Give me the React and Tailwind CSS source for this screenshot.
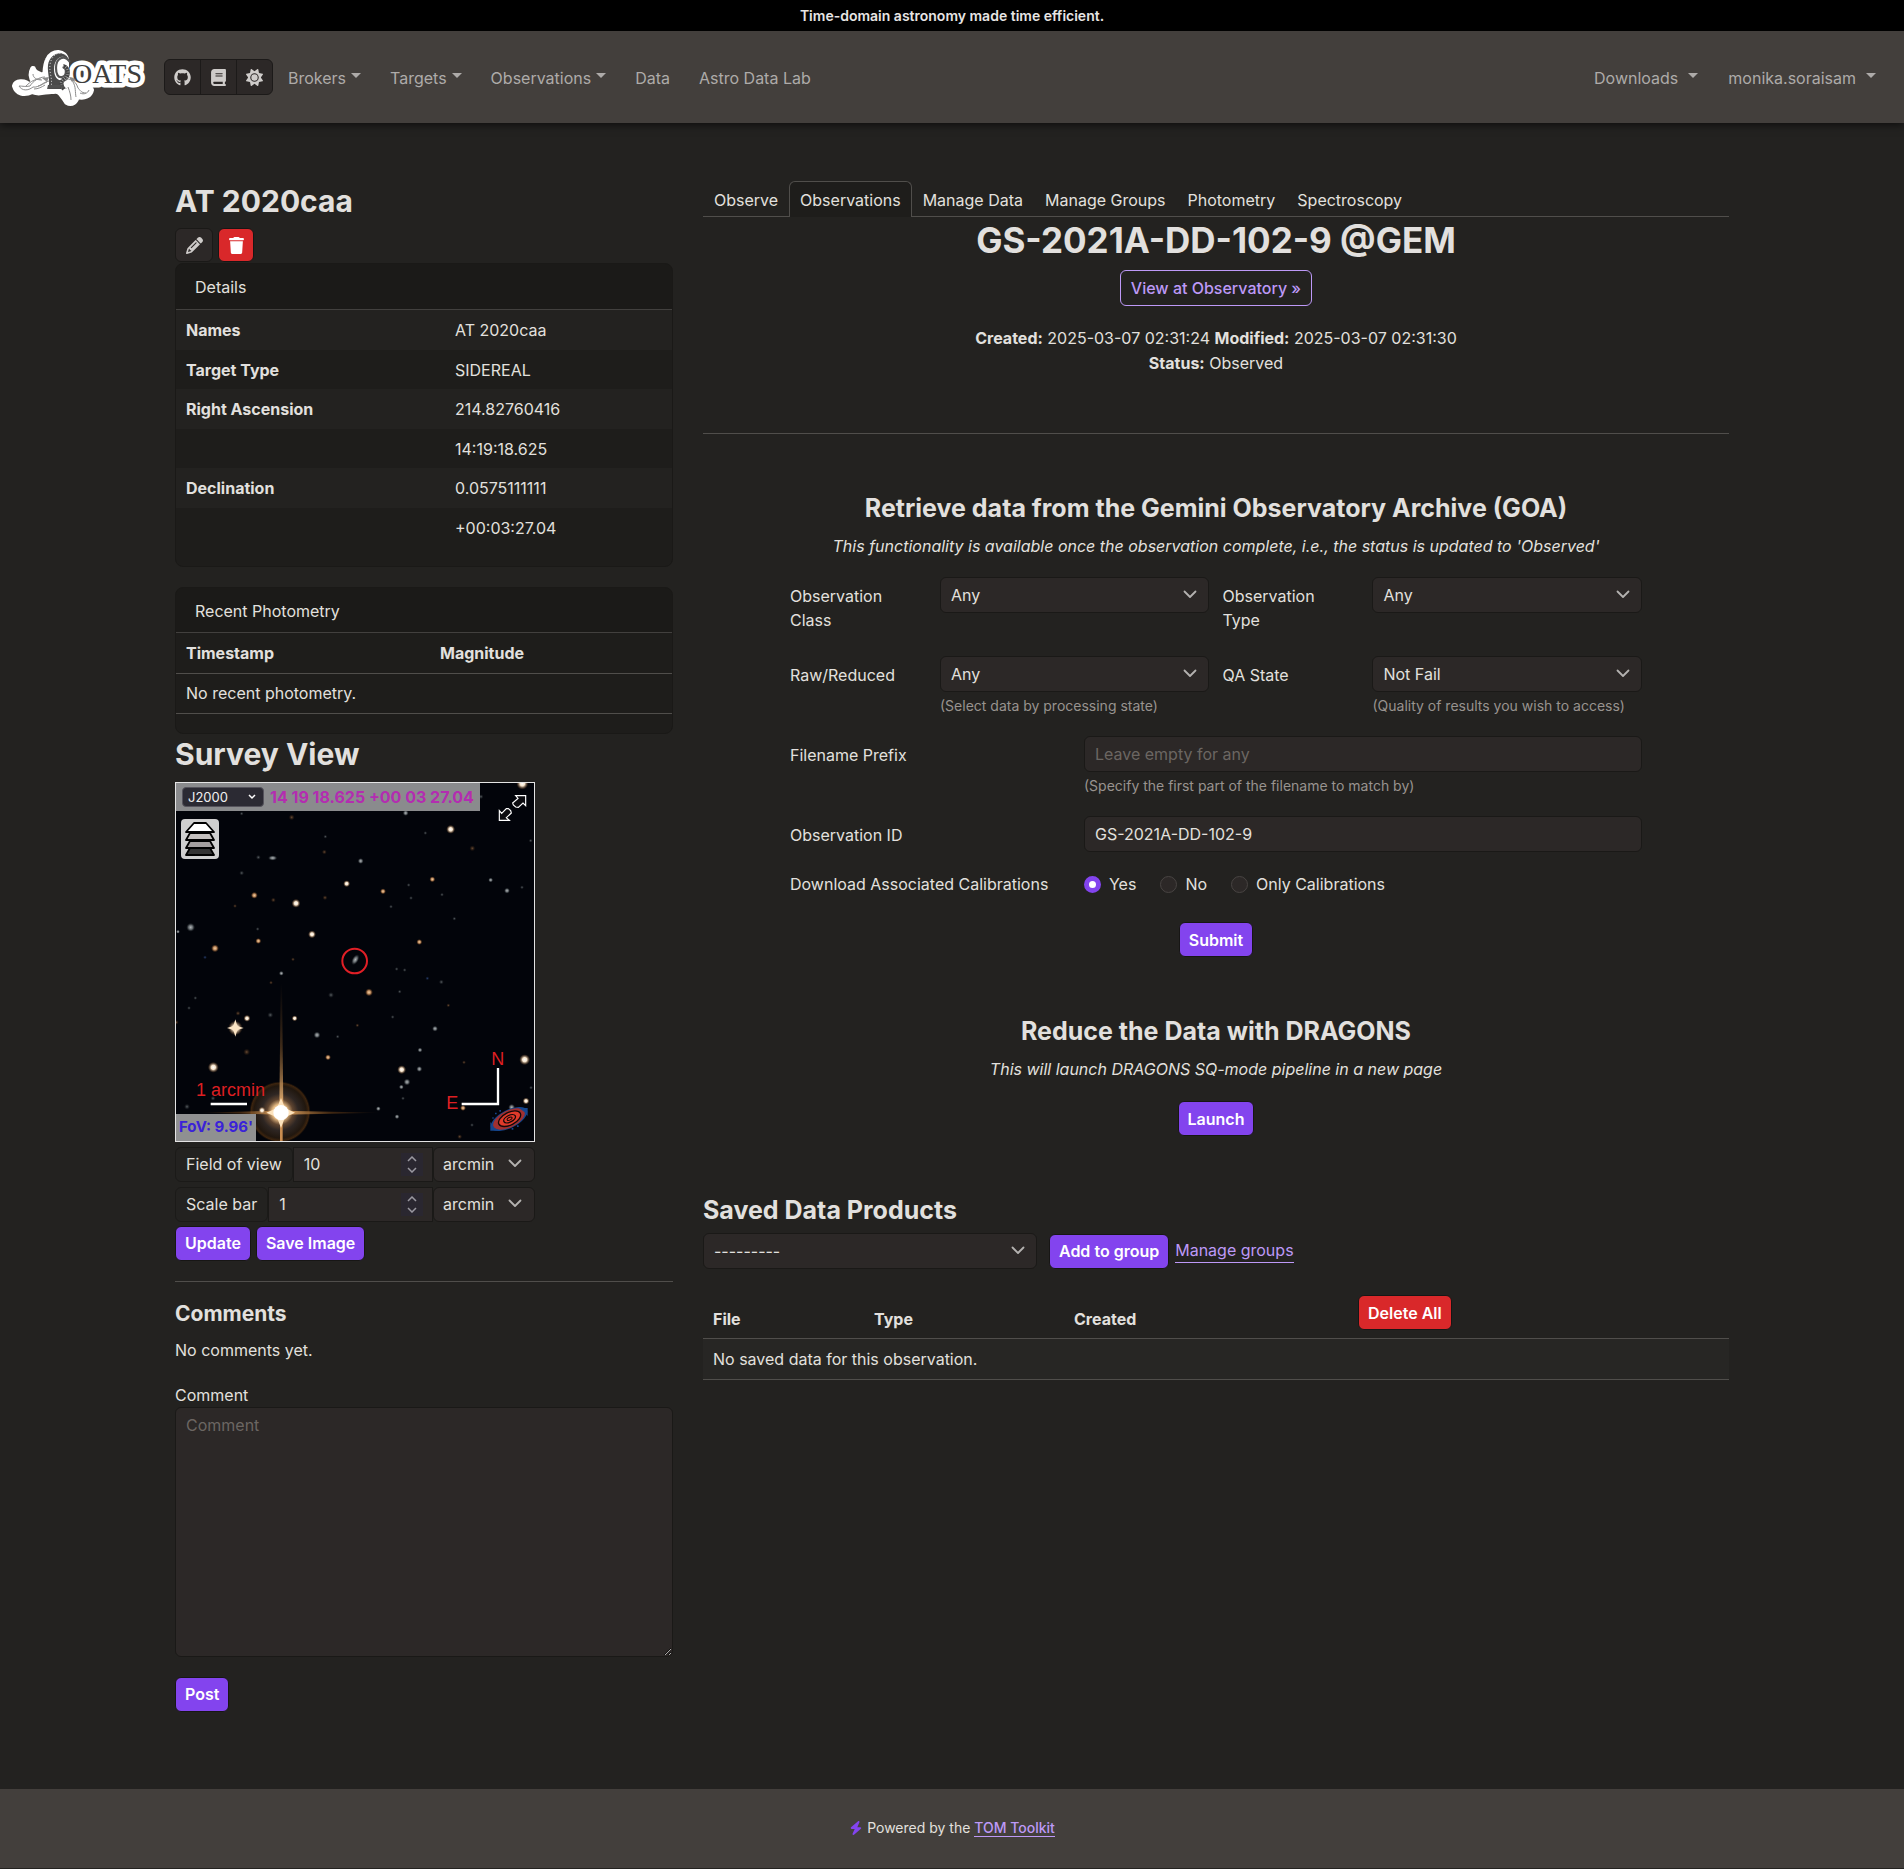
import React from "react";
import { FaGithub, FaBook, FaSun, FaPencil, FaTrash, FaBolt } from "react-icons/fa6";

const field =
  "block w-full h-9 rounded-md border border-[#1a1917] bg-[#2c2827] px-[10px] text-base text-[#e2e0de] placeholder:text-[#6b6662] outline-none";
const primary =
  "inline-flex h-[35px] items-center rounded-md border border-[#171615] bg-[#8344ee] px-[9px] text-base font-semibold text-white";

function Chevron({ className }) {
  return (
    <svg viewBox="0 0 14 9" className={className} fill="none" stroke="#b4b2b0" strokeWidth="1.8" strokeLinecap="round" strokeLinejoin="round" aria-hidden="true">
      <path d="M1.5 1.5 7 7l5.500-5.500" />
    </svg>
  );
}

function SelectBox({ id, value, label }) {
  return (
    <div className="relative">
      <select id={id} aria-label={label} defaultValue={value} className={field + " appearance-none pr-8"}>
        <option>{value}</option>
      </select>
      <Chevron className="pointer-events-none absolute right-3 top-[13px] h-[9px] w-[14px]" />
    </div>
  );
}

function Caret() {
  return <span className="mb-1 inline-block border-x-[5px] border-t-[5px] border-x-transparent border-t-current" />;
}

function Logo() {
  const ground = "M18 39C12 33 4 35 3 39c2 7 9 9 17 5 7 4 15-1 21 0 7-2 9 4 14 11 5 3 9-1 10-6 8 2 13-1 14-6-2-5-9-4-12-1-2-7-7-11-13-12V14C54 4 40 3 36 13c-3 6-2 12-3 17-5-3-11-3-12-8-2 4-2 9 1 12z";
  return (
    <svg viewBox="0 0 134 60" className="h-[60px] w-[134px]" aria-label="GOATS" role="img">
      <path d={ground} fill="#fff" stroke="#fff" strokeWidth="6" strokeLinejoin="round" />
      <text x="60" y="36" fontFamily="Liberation Serif" fontSize="28" fill="#3d3d3d" stroke="#fff" strokeWidth="9" strokeLinejoin="round" paintOrder="stroke">OATS</text>
      <path d="M57 13C53 2 38 5 36 18c-1 8 3 16 0 24h17c-3-8-1-13-5-16" fill="#4a4a4a" />
      <path d="M57 14C51 5 42 11 42 22c0 7 3 12 8 11 6-1 6-11 1-14-4 0-5 6-2 9" fill="#fff" />
      <path d="M58 15C52 7 44 11 44 21c0 6 2 10 6 9 5-1 5-9 1-10" fill="none" stroke="#555" strokeWidth="2.200" />
      <path d="M54 8c-8-5-15 1-16 10-1 8 3 14 1 22" fill="none" stroke="#ddd" strokeWidth="1" strokeDasharray="1 2" />
      <path d="M51 19c7 2 6 12 0 14-3 3-3 6 1 9" fill="none" stroke="#444" strokeWidth="4" />
      <path d="M51 19c7 2 6 12 0 14-3 3-3 6 1 9" fill="none" stroke="#bbb" strokeWidth="3" strokeDasharray=".6 2" />
      <g fill="none" stroke="#8d8d8d" strokeWidth="1">
        <path d="M33 30c-6 0-12 4-15 9-4 1-8 0-11 0 3 5 9 5 14 1 6 1 10-5 16-6M21 27c0 4 4 6 9 6M14 39c5-5 9-7 15-7M22 42c4 0 8-2 11-4M54 32c7 0 10 3 12 9 2 2 3 5 8 5M56 40c2 5 3 9 3 13M61 35c3 5 2 10 3 15M68 46c4 2 8 0 9-3M26 39c3 0 6-3 9-4" />
      </g>
      <path d="M36 38h14l5 4c-6-2-13-1-20 0z" fill="#505050" />
      <path d="M57 30c3 0 5 1 7 3l-4 2zM30 31l7-1-2 5z" fill="#8a8a8a" />
    </svg>
  );
}

const stars = [
  [857, 178, 9, "w"], [587, 273, 6, "g"], [545, 341, 7, "w"], [654, 364, 6, "o"], [802, 328, 6, "o"],
  [393, 400, 9, "w"], [268, 376, 7, "o"], [441, 493, 8, "w"], [280, 513, 6, "o"], [150, 535, 8, "o"],
  [77, 472, 9, "g"], [763, 516, 6, "o"], [349, 610, 5, "g"], [612, 667, 8, "o"], [246, 745, 7, "w"],
  [389, 745, 6, "w"], [456, 795, 7, "g"], [489, 862, 6, "o"], [145, 892, 11, "w"], [710, 899, 9, "w"],
  [1079, 869, 11, "w"], [1083, 993, 7, "w"], [1072, 41, 12, "w"], [1026, 362, 6, "g"], [977, 330, 5, "g"],
  [810, 776, 6, "g"], [765, 840, 5, "g"], [763, 897, 6, "g"], [726, 936, 7, "g"], [709, 951, 5, "g"],
  [245, 846, 7, "d"], [894, 1014, 6, "o"], [1040, 1012, 7, "g"], [696, 1040, 5, "g"], [640, 1016, 5, "g"],
  [884, 1100, 5, "d"], [83, 1099, 9, "w"], [530, 114, 7, "g"], [546, 117, 5, "g"], [722, 129, 6, "g"],
  [280, 262, 5, "s"], [230, 309, 5, "s"], [380, 142, 6, "d"], [478, 246, 5, "d"], [922, 235, 6, "d"],
  [230, 131, 4, "s"], [480, 383, 5, "d"], [325, 390, 5, "d"], [278, 477, 4, "s"], [316, 735, 6, "s"],
  [219, 730, 5, "d"], [120, 562, 4, "b"], [719, 600, 4, "s"], [829, 636, 5, "s"], [787, 625, 4, "b"],
  [498, 675, 6, "s"], [850, 706, 4, "d"], [577, 766, 4, "d"], [683, 741, 4, "s"], [66, 1010, 6, "s"],
  [1071, 352, 4, "s"], [948, 80, 5, "s"], [831, 374, 4, "s"], [731, 345, 4, "s"], [678, 410, 4, "s"],
  [897, 877, 4, "d"], [144, 985, 5, "s"], [34, 757, 5, "d"], [39, 485, 4, "g"], [91, 684, 4, "s"],
  [72, 714, 4, "s"], [481, 200, 4, "s"], [738, 384, 4, "s"], [868, 446, 4, "s"], [1097, 212, 4, "s"],
  [318, 638, 4, "d"], [695, 597, 4, "s"], [704, 665, 4, "s"], [518, 800, 4, "s"], [1098, 953, 4, "s"],
  [921, 1065, 4, "s"], [714, 985, 4, "s"], [210, 408, 4, "d"], [781, 189, 4, "s"], [384, 568, 4, "d"],
];
const fills = { w: "url(#starWhite)", o: "url(#starOrange)", g: "url(#starGray)", b: "url(#starBlue)", d: "url(#starAmber)", s: "url(#starDim)" };

function SkyMap() {
  return (
    <svg viewBox="33 39 1074 1074" className="absolute inset-0 h-full w-full" aria-hidden="true">
      <defs>
        <radialGradient id="starWhite"><stop offset="0" stopColor="#fff" /><stop offset=".4" stopColor="#f5e3cb" /><stop offset="1" stopColor="#7a4a20" stopOpacity="0" /></radialGradient>
        <radialGradient id="starOrange"><stop offset="0" stopColor="#f4d0a4" /><stop offset=".45" stopColor="#b8865a" /><stop offset="1" stopColor="#5a3010" stopOpacity="0" /></radialGradient>
        <radialGradient id="starGray"><stop offset="0" stopColor="#b4b8ba" /><stop offset=".5" stopColor="#5e6468" /><stop offset="1" stopColor="#202428" stopOpacity="0" /></radialGradient>
        <radialGradient id="starBlue"><stop offset="0" stopColor="#2c4270" /><stop offset="1" stopColor="#102040" stopOpacity="0" /></radialGradient>
        <radialGradient id="starAmber"><stop offset="0" stopColor="#6a4c34" /><stop offset="1" stopColor="#301c0c" stopOpacity="0" /></radialGradient>
        <radialGradient id="starDim"><stop offset="0" stopColor="#5a6064" /><stop offset="1" stopColor="#202428" stopOpacity="0" /></radialGradient>
        <radialGradient id="halo"><stop offset="0" stopColor="#fff2d8" /><stop offset=".25" stopColor="#e8bc84" /><stop offset=".42" stopColor="#6a4c34" stopOpacity=".9" /><stop offset=".6" stopColor="#332a26" stopOpacity=".9" /><stop offset=".85" stopColor="#24190f" stopOpacity=".9" /><stop offset=".94" stopColor="#43280f" stopOpacity=".9" /><stop offset="1" stopColor="#2a1808" stopOpacity="0" /></radialGradient>
        <linearGradient id="spikeV" x1="0" y1="0" x2="0" y2="1"><stop offset="0" stopColor="#6a4520" stopOpacity="0" /><stop offset=".5" stopColor="#7a5228" stopOpacity=".5" /><stop offset="1" stopColor="#f0b878" /></linearGradient>
        <linearGradient id="spikeH"><stop offset="0" stopColor="#e8ac68" /><stop offset=".5" stopColor="#7a4818" stopOpacity=".5" /><stop offset="1" stopColor="#7a4818" stopOpacity="0" /></linearGradient>
        <linearGradient id="spikeL" x1="1" y1="0" x2="0" y2="0"><stop offset="0" stopColor="#e8ac68" /><stop offset=".5" stopColor="#7a4818" stopOpacity=".5" /><stop offset="1" stopColor="#7a4818" stopOpacity="0" /></linearGradient>
      </defs>
      <rect x="33" y="39" width="1074" height="1074" fill="#02040a" />
      {stars.map(([x, y, r, c]) => (
        <circle key={x + "-" + y} cx={x} cy={y} r={r * 1.5} fill={fills[c]} />
      ))}
      <ellipse cx="323" cy="264" rx="14" ry="8" fill="url(#starGray)" />
      <ellipse cx="571" cy="569" rx="10" ry="18" fill="url(#starGray)" transform="rotate(30 571 569)" />
      <circle cx="345" cy="1026" r="92" fill="url(#halo)" />
      <path d="M347 640h4l4 380h-12z" fill="url(#spikeV)" />
      <path d="M345 1024v90h8v-90z" fill="#c98d50" />
      <path d="M350 1022l300 6-300 6z" fill="url(#spikeH)" />
      <path d="M350 1022l-250 6 250 6z" fill="url(#spikeL)" />
      <path d="M348 984l12 30 30 14-30 14-12 32-12-32-32-14 32-14z" fill="#fde3bd" />
      <circle cx="348" cy="1028" r="23" fill="#fff" />
      <circle cx="291" cy="1021" r="11" fill="url(#starWhite)" />
      <circle cx="211" cy="774" r="22" fill="url(#starWhite)" />
      <path d="M211 748l6 20 19 6-19 6-6 20-6-20-19-6 19-6z" fill="#fbe4c4" />
      <circle cx="569" cy="573" r="37" fill="none" stroke="#e01f26" strokeWidth="6" />
      <path d="M137 1002h109" stroke="#fff" strokeWidth="7" />
      <path d="M999 894v108H890" fill="none" stroke="#fff" strokeWidth="7" />
      <g fill="#dd1f22" fontFamily="Liberation Sans" fontSize="54">
        <text x="93" y="977">1 arcmin</text>
        <text x="979" y="884">N</text>
        <text x="844" y="1017">E</text>
      </g>
      <g transform="rotate(-27 1032 1047)">
        <ellipse cx="1032" cy="1047" rx="60" ry="27" fill="#15458c" />
        <ellipse cx="1032" cy="1047" rx="52" ry="25" fill="#a03030" />
        <ellipse cx="1034" cy="1047" rx="36" ry="19" fill="#e03a2a" stroke="#120808" strokeWidth="4" />
        <ellipse cx="1034" cy="1047" rx="19" ry="10" fill="#e03a2a" stroke="#120808" strokeWidth="4" />
        <ellipse cx="1034" cy="1047" rx="8" ry="4" fill="#e03a2a" stroke="#120808" strokeWidth="3" />
      </g>
      <g fill="#15458c">
        <path d="M1062 1014h26v24l-10-12zM976 1056v26h32l-20-8zM990 1028h5v5h-5zM1003 1020h5v5h-5zM1040 1074h5v5h-5zM1056 1066h5v5h-5zM982 1042h4v4h-4z" />
      </g>
      <g fill="#0c0c10" stroke="#fff" strokeWidth="3.500" strokeLinejoin="miter">
        <path d="M1052 77h30v30l-8-8-14 13-8-1-7-6-2-6 16-14z" />
        <path d="M1003 122v29h30l-9-8 15-14-2-7-7-6-6 0-14 14z" />
      </g>
    </svg>
  );
}

function LayersIcon() {
  return (
    <svg viewBox="0 0 30 34" className="h-[34px] w-[30px]" stroke="#000" strokeWidth="1.800" strokeLinejoin="round" aria-hidden="true">
      <path d="M5 26h20l4 7H1z" fill="#333" />
      <path d="M5 19h20l4 7H1z" fill="#a5a0a0" />
      <path d="M5 11h20l4 7H1z" fill="#c4c0be" />
      <path d="M9 1h12l8 9H1z" fill="#fff" />
    </svg>
  );
}

function UnitRow({ id, label, value }) {
  return (
    <div className="flex h-[35px]">
      <label htmlFor={id} className="flex items-center rounded-md border border-[#1b1a18] px-[10px]">{label}</label>
      <div className="relative min-w-0 flex-1">
        <input id={id} type="text" inputMode="numeric" defaultValue={value} className="h-full w-full border border-[#1a1917] bg-[#2c2827] px-[10px] text-[#e2e0de] outline-none" />
        <span className="pointer-events-none absolute right-[10px] top-[6px] flex h-[23px] w-[22px] flex-col items-center justify-center gap-[5px] bg-[#2a2730]">
          <svg viewBox="0 0 10 6" className="h-[6px] w-[10px]" fill="none" stroke="#9a98a0" strokeWidth="1.500"><path d="M1 5l4-4 4 4" /></svg>
          <svg viewBox="0 0 10 6" className="h-[6px] w-[10px]" fill="none" stroke="#9a98a0" strokeWidth="1.500"><path d="M1 1l4 4 4-4" /></svg>
        </span>
      </div>
      <div className="relative w-[102px]">
        <select aria-label={label + " unit"} className="h-full w-full appearance-none rounded-md border border-[#1a1917] bg-[#2c2827] px-[9px] text-[#e2e0de] outline-none">
          <option>arcmin</option>
        </select>
        <Chevron className="pointer-events-none absolute right-[13px] top-3 h-[9px] w-[14px]" />
      </div>
    </div>
  );
}

function NavLink({ children, caret, gap }) {
  return (
    <a href="#" className={"flex items-center whitespace-nowrap " + (gap ? "gap-[10px]" : "gap-[5px]")}>
      {children}
      {caret && <Caret />}
    </a>
  );
}

function Header() {
  return (
    <>
      <div className="bg-black text-center text-sm font-semibold leading-[31px] text-[#e7e5e4]">Time-domain astronomy made time efficient.</div>
      <nav className="relative flex h-[92px] items-center bg-[#433f3c] px-3 text-base text-[#aeaba9] shadow-[0_2px_8px_rgba(0,0,0,0.6)]">
        <a href="#"><Logo /></a>
        <div className="ml-[18px] flex h-9 overflow-hidden rounded-md border border-[#1c1a19] bg-[#2c2827] text-[#cfccca]">
          <a href="#" aria-label="GitHub" className="flex w-9 items-center justify-center border-r border-[#1c1a19]"><FaGithub size={17} /></a>
          <a href="#" aria-label="Documentation" className="flex w-9 items-center justify-center border-r border-[#1c1a19]"><FaBook size={17} /></a>
          <button aria-label="Theme" className="flex w-[35px] items-center justify-center"><FaSun size={17} /></button>
        </div>
        <div className="ml-[15px] flex gap-[29px] pt-px">
          <NavLink caret>Brokers</NavLink>
          <NavLink caret>Targets</NavLink>
          <NavLink caret>Observations</NavLink>
          <NavLink>Data</NavLink>
          <NavLink>Astro Data Lab</NavLink>
        </div>
        <div className="ml-auto mr-4 flex gap-[30px] pt-px">
          <NavLink caret gap>Downloads</NavLink>
          <NavLink caret gap>monika.soraisam</NavLink>
        </div>
      </nav>
    </>
  );
}

const details = [
  ["Names", "AT 2020caa"],
  ["Target Type", "SIDEREAL"],
  ["Right Ascension", "214.82760416"],
  ["", "14:19:18.625"],
  ["Declination", "0.0575111111"],
  ["", "+00:03:27.04"],
];

function Sidebar() {
  return (
    <aside className="w-1/3 px-[15px]">
      <h1 className="mb-[7px] text-3xl/10 font-bold">AT 2020caa</h1>
      <div className="mb-px flex gap-[5px]">
        <a href="#" aria-label="Edit" className="flex h-[34px] w-[38px] items-center justify-center rounded-md border border-[#1a1917] bg-[#2c2827] text-[#cfccca]"><FaPencil size={17} /></a>
        <button aria-label="Delete" className="flex h-[34px] w-[36px] items-center justify-center rounded-md border border-[#171615] bg-[#d9282a] text-white"><FaTrash size={17} /></button>
      </div>
      <section className="mb-5 overflow-hidden rounded-lg border border-[#1a1917] bg-[#1e1d1b] pb-[19px]">
        <h2 className="h-[46px] border-b border-[#42403e] bg-[#1b1a18] px-[19px] leading-[47px]">Details</h2>
        <table className="w-full table-fixed">
          <tbody>
            {details.map(([k, v], i) => (
              <tr key={i} className="h-10 odd:bg-[#232220] even:h-[39px]">
                <th scope="row" className="w-[271px] px-[10px] text-left font-bold">{k}</th>
                <td className="px-2">{v}</td>
              </tr>
            ))}
          </tbody>
        </table>
      </section>
      <section className="overflow-hidden rounded-lg border border-[#1a1917] bg-[#1e1d1b] pb-[19px]">
        <h2 className="h-[45px] border-b border-[#42403e] bg-[#1b1a18] px-[19px] leading-[46px]">Recent Photometry</h2>
        <table className="w-full table-fixed">
          <thead>
            <tr className="h-10 border-b border-[#504e4b] text-left">
              <th className="w-[256px] px-[10px] font-bold">Timestamp</th>
              <th className="px-2 font-bold">Magnitude</th>
            </tr>
          </thead>
          <tbody>
            <tr className="h-10 border-b border-[#504e4b]"><td colSpan={2} className="px-[10px]">No recent photometry.</td></tr>
          </tbody>
        </table>
      </section>
      <h2 className="mb-2 text-3xl/10 font-bold">Survey View</h2>
      <div className="w-[360px]">
        <div className="relative h-[360px] overflow-hidden border border-[#e4e4e4]">
          <SkyMap />
          <div className="absolute left-0 top-0 flex h-7 items-center gap-1.5 whitespace-nowrap bg-[#8a8b8d] px-1.5 text-base font-bold text-[#b32db0]">
            <div className="relative">
              <select aria-label="Frame" className="block h-5 w-[82px] appearance-none rounded border border-[#55535c] bg-[#2b2a33] px-[5px] text-[13px] font-normal text-[#f0f0f0]"><option>J2000</option></select>
              <svg viewBox="0 0 8 6" className="pointer-events-none absolute right-2 top-[7px] h-1.5 w-2" fill="none" stroke="#fff" strokeWidth="1.500"><path d="M1 1l3 3 3-3" /></svg>
            </div>
            14 19 18.625 +00 03 27.04
          </div>
          <button aria-label="Layers" className="absolute left-[5px] top-9 flex h-10 w-[38px] items-center justify-center rounded bg-[#cfcfcf]"><LayersIcon /></button>
          <div className="absolute bottom-0 left-0 h-[27px] whitespace-nowrap bg-[#8f9091] px-[3px] text-[15px]/[26px] font-bold text-[#3a22d8]">FoV: 9.96'</div>
        </div>
        <div className="mt-[5px] flex flex-col gap-[5px]">
          <UnitRow id="fov" label="Field of view" value="10" />
          <UnitRow id="scale" label="Scale bar" value="1" />
        </div>
        <div className="mt-1 flex gap-[5px]">
          <button className={primary}>Update</button>
          <button className={primary}>Save Image</button>
        </div>
      </div>
      <hr className="mt-5 border-[#504e4b]" />
      <h3 className="mt-[17px] text-[21px]/[30px] font-bold">Comments</h3>
      <p className="mt-[9px]">No comments yet.</p>
      <label htmlFor="comment" className="mt-[21px] block">Comment</label>
      <textarea id="comment" placeholder="Comment" className="block h-[250px] w-full rounded-md border border-[#1a1917] bg-[#2c2827] px-[10px] py-[5px] placeholder:text-[#6b6662] outline-none" />
      <button className={primary + " mt-5"}>Post</button>
    </aside>
  );
}

function Half({ id, label, value, help }) {
  return (
    <div className="flex">
      <label htmlFor={id} className="w-[150px] shrink-0 pr-6 pt-[7px]">{label}</label>
      <div className="min-w-0 flex-1">
        <SelectBox id={id} value={value} />
        {help && <p className="mt-1 whitespace-nowrap text-sm text-[#98938f]">{help}</p>}
      </div>
    </div>
  );
}

function Wide({ id, label, help, ...rest }) {
  return (
    <div className="mt-5 flex">
      <label htmlFor={id} className="w-[294px] shrink-0 pt-[7px]">{label}</label>
      <div className="flex-1">
        <input id={id} type="text" className={field} {...rest} />
        {help && <p className="mt-1 text-sm text-[#98938f]">{help}</p>}
      </div>
    </div>
  );
}

function Radio({ label, checked }) {
  return (
    <label className="flex items-center gap-2">
      <input type="radio" name="calibrations" defaultChecked={checked} className="h-[17px] w-[17px] appearance-none rounded-full border border-[#484442] bg-[#2c2827] checked:border-[5px] checked:border-[#8344ee] checked:bg-white" />
      {label}
    </label>
  );
}

function Content() {
  const tabs = ["Observe", "Observations", "Manage Data", "Manage Groups", "Photometry", "Spectroscopy"];
  return (
    <section className="w-2/3 px-[15px]">
      <div className="flex h-9 border-b border-[#504e4b]">
        {tabs.map((t) => (
          <a
            key={t}
            href="#"
            className={
              "flex h-9 items-center whitespace-nowrap border px-[10px] pt-px " +
              (t === "Observations" ? "rounded-t-md border-b-0 border-[#504e4b] bg-[#1e1d1b]" : "border-transparent")
            }
          >
            {t}
          </a>
        ))}
      </div>
      <div className="text-center">
        <h1 className="mt-[3px] text-[35px]/10 font-bold">GS-2021A-DD-102-9 @GEM</h1>
        <a href="#" className="mt-2.5 inline-flex h-9 items-center rounded-md border border-[#bd99f7] px-[10px] font-medium text-[#bd99f7]">View at Observatory »</a>
        <p className="mt-5 leading-[25px]">
          <b className="font-bold">Created:</b> 2025-03-07 02:31:24 <b className="font-bold">Modified:</b> 2025-03-07 02:31:30
          <br />
          <b className="font-bold">Status:</b> Observed
        </p>
      </div>
      <hr className="mt-[57px] border-[#504e4b]" />
      <div className="px-[87px]">
        <h2 className="mt-[58px] text-center text-[25px]/8 font-bold">Retrieve data from the Gemini Observatory Archive (GOA)</h2>
        <p className="mt-2.5 text-center italic">This functionality is available once the observation complete, i.e., the status is updated to 'Observed'</p>
        <form className="mt-[19px]" onSubmit={(e) => e.preventDefault()}>
          <div className="grid grid-cols-2 gap-x-[13px] gap-y-6">
            <Half id="oclass" label="Observation Class" value="Any" />
            <Half id="otype" label="Observation Type" value="Any" />
            <Half id="raw" label="Raw/Reduced" value="Any" help="(Select data by processing state)" />
            <Half id="qa" label="QA State" value="Not Fail" help="(Quality of results you wish to access)" />
          </div>
          <Wide id="prefix" label="Filename Prefix" placeholder="Leave empty for any" help="(Specify the first part of the filename to match by)" />
          <Wide id="obsid" label="Observation ID" defaultValue="GS-2021A-DD-102-9" />
          <fieldset className="mt-5 flex">
            <legend className="float-left w-[294px]">Download Associated Calibrations</legend>
            <div className="flex gap-6">
              <Radio label="Yes" checked />
              <Radio label="No" />
              <Radio label="Only Calibrations" />
            </div>
          </fieldset>
          <div className="mt-[26px] flex justify-center"><button className={primary}>Submit</button></div>
        </form>
        <h2 className="mt-[58px] text-center text-[25px]/8 font-bold">Reduce the Data with DRAGONS</h2>
        <p className="mt-2.5 text-center italic">This will launch DRAGONS SQ-mode pipeline in a new page</p>
        <div className="mt-5 flex justify-center"><button className={primary}>Launch</button></div>
      </div>
      <h2 className="mt-[58px] text-[25px]/8 font-bold">Saved Data Products</h2>
      <div className="mt-[7px] flex items-center">
        <div className="w-[334px]"><SelectBox id="group" label="Group" value="---------" /></div>
        <button className={primary + " ml-3"}>Add to group</button>
        <a href="#" className="ml-1.5 border-b border-[#bd99f7] leading-[23px] text-[#bd99f7]">Manage groups</a>
      </div>
      <table className="mt-5 w-full table-fixed text-left">
        <thead>
          <tr className="border-b border-[#504e4b]">
            <th className="w-[163px] px-[10px] pt-3 font-bold">File</th>
            <th className="w-[200px] px-2 pt-3 font-bold">Type</th>
            <th className="w-[284px] px-2 pt-3 font-bold">Created</th>
            <th className="h-[49px] px-2 pt-1.5 align-top">
              <button className="flex h-[35px] items-center rounded-md border border-[#171615] bg-[#d9282a] px-[9px] font-semibold text-white">Delete All</button>
            </th>
          </tr>
        </thead>
        <tbody>
          <tr className="h-[41px] border-b border-[#504e4b] bg-[#272624]"><td colSpan={4} className="px-[10px]">No saved data for this observation.</td></tr>
        </tbody>
      </table>
    </section>
  );
}

export default function App() {
  return (
    <div className="min-h-screen bg-[#232220] font-['Inter',sans-serif] text-base text-[#e2e0de]">
      <Header />
      <main className="mx-auto flex w-full max-w-[1584px] pb-[77px] pt-[58px]">
        <Sidebar />
        <Content />
      </main>
      <footer className="flex h-[79px] items-center justify-center gap-1 bg-[#433f3c] text-sm">
        <FaBolt size={14} className="text-[#8344ee]" />
        <span>Powered by the <a href="#" className="border-b border-[#bd99f7] font-medium text-[#bd99f7]">TOM Toolkit</a></span>
      </footer>
    </div>
  );
}
